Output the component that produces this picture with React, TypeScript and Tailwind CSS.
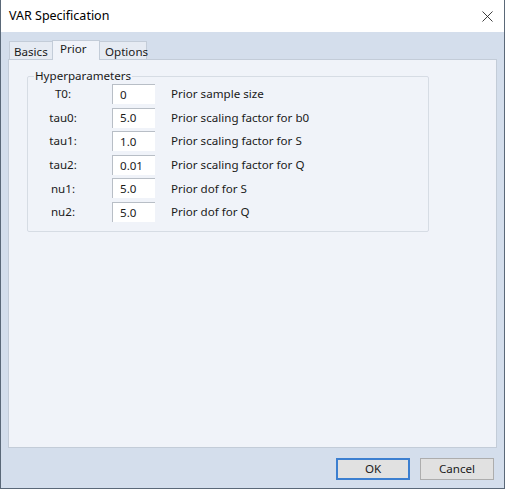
import { X } from 'lucide-react';

const rows = [
  { label: 'T0:', value: '0', desc: 'Prior sample size' },
  { label: 'tau0:', value: '5.0', desc: 'Prior scaling factor for b0' },
  { label: 'tau1:', value: '1.0', desc: 'Prior scaling factor for S' },
  { label: 'tau2:', value: '0.01', desc: 'Prior scaling factor for Q' },
  { label: 'nu1:', value: '5.0', desc: 'Prior dof for S' },
  { label: 'nu2:', value: '5.0', desc: 'Prior dof for Q' },
];

export default function App() {
  return (
    <div className="w-[505px] h-[489px] flex flex-col bg-[#d4deec] border border-t-0 border-[#5a6878] text-[11.6px] text-[#1a1a1a] font-['Noto_Sans',sans-serif] overflow-hidden">
      {/* Title bar */}
      <div className="h-[32px] bg-white flex items-center justify-between pl-[8px] pr-[7px] shrink-0">
        <span className="text-[12.5px] text-black">VAR Specification</span>
        <X className="w-[19px] h-[19px] text-[#222]" strokeWidth={1.1} />
      </div>

      {/* Tabs */}
      <div className="flex items-end pl-[8px] pt-[8px] h-[27px] shrink-0">
        <div className="h-[18px] w-[44px] pl-[4px] flex items-end leading-[14px] pb-0 border border-b-0 border-[#c3ccd8] bg-[#e6ebf3]">Basics</div>
        <div className="h-[20px] w-[48px] pl-[7px] flex items-start leading-[14px] pt-[1px] border border-b-0 border-[#c3ccd8] bg-[#f0f3f9] -ml-px relative z-10 -mb-px">Prior</div>
        <div className="h-[18px] w-[47px] pl-[5px] flex items-end leading-[14px] pb-0 border border-b-0 border-l-0 border-[#c3ccd8] bg-[#e6ebf3]">Options</div>
      </div>

      {/* Panel */}
      <div className="mx-[7px] h-[389px] border border-[#c3ccd8] bg-[#f0f3f9] pt-[10px] pl-[18px] shrink-0">
        <fieldset className="w-[402px] h-[162px] border border-[#d6dce4] rounded-[2px] pl-[8px] pr-0 pb-0 m-0">
          <legend className="px-[1px] ml-[-2px] leading-[12px]">Hyperparameters</legend>
          <div className="flex flex-col gap-[3.6px] mt-[2px]">
            {rows.map((r) => (
              <div key={r.label} className="flex items-center h-[20px]">
                <span className="w-[54px] text-center">{r.label}</span>
                <div className="ml-[22px] w-[43px] h-[20px] bg-white border-t border-l border-[#b8bec6] pl-[7px] flex items-center">{r.value}</div>
                <span className="ml-[16px]">{r.desc}</span>
              </div>
            ))}
          </div>
        </fieldset>
      </div>

      {/* Buttons */}
      <div className="flex justify-end gap-[10px] pr-[10px] pt-[10px]">
        <button className="w-[74px] h-[22px] border-2 border-[#3c7fd0] bg-[#e1e1e1] flex items-center justify-center">OK</button>
        <button className="w-[74px] h-[22px] border border-[#adadad] bg-[#e1e1e1] flex items-center justify-center">Cancel</button>
      </div>
    </div>
  );
}
